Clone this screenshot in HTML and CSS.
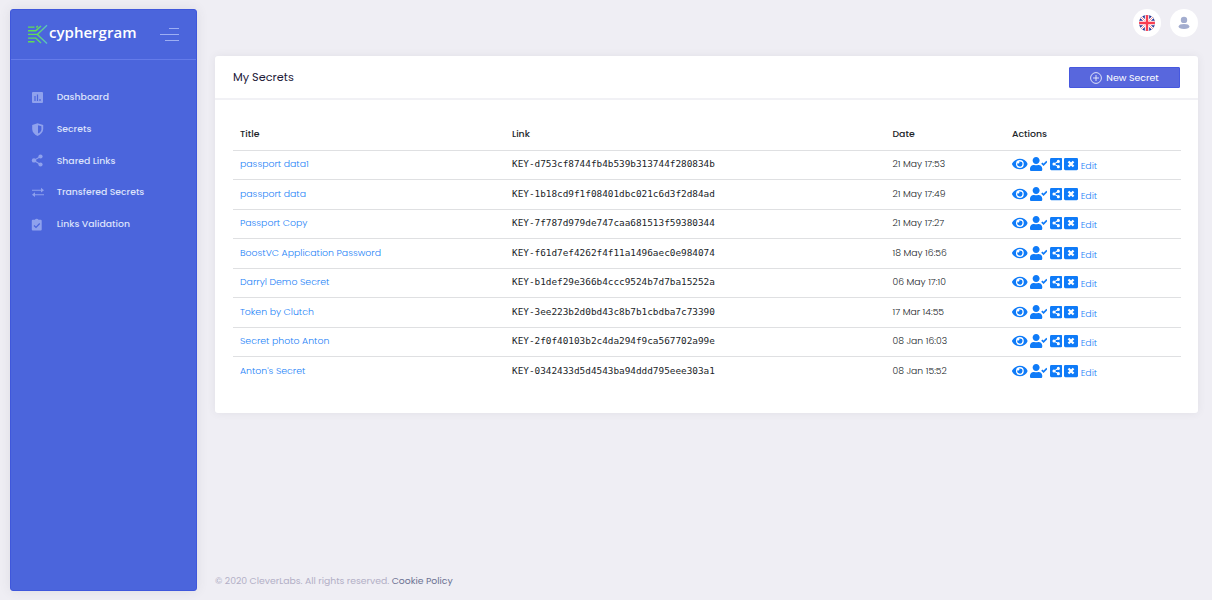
FILE: index.html
```html
<!DOCTYPE html>
<html lang="en">
  <head>
    <meta charset="UTF-8" />
    <meta name="viewport" content="width=device-width, initial-scale=1.0" />
    <title>My Secrets</title>
    <link rel="stylesheet" href="styles.css">
  </head>
  <body>
    <!-- shared icons -->
    <svg class="sprite">
      <symbol id="eye" viewBox="0 0 576 512"><path d="M572.52 241.4C518.29 135.59 410.93 64 288 64S57.68 135.64 3.48 241.41a32.35 32.35 0 0 0 0 29.19C57.71 376.41 165.07 448 288 448s230.32-71.64 284.52-177.41a32.35 32.35 0 0 0 0-29.19zM288 400a144 144 0 1 1 144-144 143.93 143.93 0 0 1-144 144zm0-240a95.31 95.31 0 0 0-25.31 3.79 47.85 47.85 0 0 1-66.9 66.9A95.78 95.78 0 1 0 288 160z"/></symbol>
      <symbol id="user-check" viewBox="0 0 640 512"><path d="M224 256c70.7 0 128-57.3 128-128S294.7 0 224 0 96 57.3 96 128s57.3 128 128 128zm89.6 32h-16.7c-22.2 10.2-46.9 16-72.9 16s-50.6-5.8-72.9-16h-16.7C60.2 288 0 348.2 0 422.4V464c0 26.5 21.5 48 48 48h352c26.5 0 48-21.5 48-48v-41.6c0-74.2-60.2-134.400-134.400-134.400z"/><path d="M432 222l64 65 122-124" fill="none" stroke="currentColor" stroke-width="62"/></symbol>
      <symbol id="share-square" viewBox="0 0 448 512"><path d="M48 32h352a48 48 0 0 1 48 48v352a48 48 0 0 1-48 48H48a48 48 0 0 1-48-48V80a48 48 0 0 1 48-48z"/><g fill="#fff"><circle cx="304" cy="160" r="56"/><circle cx="144" cy="256" r="56"/><circle cx="304" cy="352" r="56"/></g><path d="M304 160L144 256l160 96" fill="none" stroke="#fff" stroke-width="36"/></symbol>
      <symbol id="close-square" viewBox="0 0 512 512"><path d="M48 32h416a48 48 0 0 1 48 48v352a48 48 0 0 1-48 48H48a48 48 0 0 1-48-48V80a48 48 0 0 1 48-48z"/><path d="M164 164l184 184M348 164L164 348" fill="none" stroke="#fff" stroke-width="84"/></symbol>
    </svg>

    <div class="page">
      <aside class="sidebar">
        <div class="brand">
          <svg class="logo" width="112" height="24" viewBox="0 0 112 24">
            <defs>
              <linearGradient id="mark" gradientUnits="userSpaceOnUse" x1="0" y1="0" x2="19" y2="0">
                <stop offset="0" stop-color="#5fdc55" />
                <stop offset=".5" stop-color="#62df52" />
                <stop offset="1" stop-color="#58bdcf" />
              </linearGradient>
            </defs>
            <g fill="none" stroke="url(#mark)" stroke-width="1.4">
              <path d="M0 3.100h6.500M0 6.700h7.700L13 1.900M8.300 3.400l1.500-1.500M0 10.400h9.300M9.300 10.400L19 1.300M9.300 10.400L19 19.500M0 14.100h7.700L13 18.900M0 17.700h6.500" />
            </g>
            <text class="logo-text" x="21" y="14" textLength="87.500" lengthAdjust="spacingAndGlyphs">cyphergram</text>
          </svg>
          <div class="toggle"><span></span><span></span><span></span></div>
        </div>
        <nav class="menu">
          <a class="menu-item">
            <svg width="13" height="13" viewBox="0 0 13 13"><rect x="1" y="1" width="11" height="11" rx="1"/><path class="cut" d="M4 5v5M6.500 3.500V10M9 8v2"/></svg>
            <span>Dashboard</span>
          </a>
          <a class="menu-item">
            <svg width="13" height="13" viewBox="0 0 13 13"><path d="M6.500.3L12.200 2v4c0 3.200-2.500 5.500-5.700 6.900C3.300 11.500 1.200 9 1.200 6V2z"/><path class="half" d="M7 2.200l3.400 1v3c0 1.900-1.300 3.300-3.400 4.300z"/></svg>
            <span>Secrets</span>
          </a>
          <a class="menu-item">
            <svg width="13" height="13" viewBox="0 0 13 13"><circle cx="9.500" cy="2.500" r="2.100"/><circle cx="3" cy="6.400" r="2.200"/><circle cx="9.500" cy="10.500" r="2.100"/><path class="line" d="M9.500 2.500L3 6.400l6.500 4.100"/></svg>
            <span>Shared Links</span>
          </a>
          <a class="menu-item">
            <svg width="13" height="13" viewBox="0 0 13 13"><path class="line" d="M1 4.200h10M3 8.700h10"/><path d="M10 1.800l3 2.400-3 2.400zM4 6.300L1 8.700l3 2.400z"/></svg>
            <span>Transfered Secrets</span>
          </a>
          <a class="menu-item">
            <svg width="13" height="13" viewBox="0 0 13 13"><path d="M1.800 1.800h2.100a2 2 0 0 1 3.600 0h2.200q1 0 1 1v8.700q0 1-1 1H1.800q-1 0-1-1V2.800q0-1 1-1z"/><path class="cut" d="M3 7.500l2 2 3.700-4"/></svg>
            <span>Links Validation</span>
          </a>
        </nav>
      </aside>

      <main class="main">
        <header class="topbar">
          <div class="round">
            <svg width="16" height="16" viewBox="0 0 16 16">
              <clipPath id="disc"><circle cx="8" cy="8" r="8"/></clipPath>
              <g clip-path="url(#disc)">
                <rect width="16" height="16" fill="#263594"/>
                <path d="M0 0l16 16M16 0L0 16" stroke="#fff" stroke-width="2.600"/>
                <path d="M0 0l16 16M16 0L0 16" stroke="#f0606d" stroke-width=".7"/>
                <path d="M8 0v16M0 8h16" stroke="#fff" stroke-width="4.400"/>
                <path d="M8 0v16M0 8h16" stroke="#f83d50" stroke-width="2.400"/>
              </g>
            </svg>
          </div>
          <div class="round">
            <svg width="12" height="14" viewBox="0 0 12 14" fill="#a3adcf"><circle cx="6" cy="3.900" r="3.200"/><path d="M.6 10.500C.8 8.800 2.700 8 6 8s5.200.8 5.400 2.500c.1 1.600-2 2.500-5.400 2.500S.5 12.100.6 10.500z"/></svg>
          </div>
        </header>

        <section class="card">
          <div class="card-header">
            <h1>My Secrets</h1>
            <button class="new-btn">
              <svg width="12" height="12" viewBox="0 0 12 12" fill="none" stroke="#fff" stroke-width=".8"><circle cx="6" cy="6" r="5.400"/><path d="M6 3v6M3 6h6"/></svg>
              <span>New Secret</span>
            </button>
          </div>
          <div class="card-body">
            <table class="secrets">
              <thead>
                <tr><th class="col-title">Title</th><th class="col-link">Link</th><th class="col-date">Date</th><th>Actions</th></tr>
              </thead>
              <tbody>
                <tr>
                  <td><a>passport data1</a></td><td class="key">KEY-d753cf8744fb4b539b313744f280834b</td><td class="date">21 May 17:53</td>
                  <td><div class="actions"><svg class="eye"><use href="#eye"/></svg><svg class="user"><use href="#user-check"/></svg><svg class="share"><use href="#share-square"/></svg><svg class="close"><use href="#close-square"/></svg><a>Edit</a></div></td>
                </tr>
                <tr>
                  <td><a>passport data</a></td><td class="key">KEY-1b18cd9f1f08401dbc021c6d3f2d84ad</td><td class="date">21 May 17:49</td>
                  <td><div class="actions"><svg class="eye"><use href="#eye"/></svg><svg class="user"><use href="#user-check"/></svg><svg class="share"><use href="#share-square"/></svg><svg class="close"><use href="#close-square"/></svg><a>Edit</a></div></td>
                </tr>
                <tr>
                  <td><a>Passport Copy</a></td><td class="key">KEY-7f787d979de747caa681513f59380344</td><td class="date">21 May 17:27</td>
                  <td><div class="actions"><svg class="eye"><use href="#eye"/></svg><svg class="user"><use href="#user-check"/></svg><svg class="share"><use href="#share-square"/></svg><svg class="close"><use href="#close-square"/></svg><a>Edit</a></div></td>
                </tr>
                <tr>
                  <td><a>BoostVC Application Password</a></td><td class="key">KEY-f61d7ef4262f4f11a1496aec0e984074</td><td class="date">18 May 16:56</td>
                  <td><div class="actions"><svg class="eye"><use href="#eye"/></svg><svg class="user"><use href="#user-check"/></svg><svg class="share"><use href="#share-square"/></svg><svg class="close"><use href="#close-square"/></svg><a>Edit</a></div></td>
                </tr>
                <tr>
                  <td><a>Darryl Demo Secret</a></td><td class="key">KEY-b1def29e366b4ccc9524b7d7ba15252a</td><td class="date">06 May 17:10</td>
                  <td><div class="actions"><svg class="eye"><use href="#eye"/></svg><svg class="user"><use href="#user-check"/></svg><svg class="share"><use href="#share-square"/></svg><svg class="close"><use href="#close-square"/></svg><a>Edit</a></div></td>
                </tr>
                <tr>
                  <td><a>Token by Clutch</a></td><td class="key">KEY-3ee223b2d0bd43c8b7b1cbdba7c73390</td><td class="date">17 Mar 14:55</td>
                  <td><div class="actions"><svg class="eye"><use href="#eye"/></svg><svg class="user"><use href="#user-check"/></svg><svg class="share"><use href="#share-square"/></svg><svg class="close"><use href="#close-square"/></svg><a>Edit</a></div></td>
                </tr>
                <tr>
                  <td><a>Secret photo Anton</a></td><td class="key">KEY-2f0f40103b2c4da294f9ca567702a99e</td><td class="date">08 Jan 16:03</td>
                  <td><div class="actions"><svg class="eye"><use href="#eye"/></svg><svg class="user"><use href="#user-check"/></svg><svg class="share"><use href="#share-square"/></svg><svg class="close"><use href="#close-square"/></svg><a>Edit</a></div></td>
                </tr>
                <tr>
                  <td><a>Anton's Secret</a></td><td class="key">KEY-0342433d5d4543ba94ddd795eee303a1</td><td class="date">08 Jan 15:52</td>
                  <td><div class="actions"><svg class="eye"><use href="#eye"/></svg><svg class="user"><use href="#user-check"/></svg><svg class="share"><use href="#share-square"/></svg><svg class="close"><use href="#close-square"/></svg><a>Edit</a></div></td>
                </tr>
              </tbody>
            </table>
          </div>
        </section>

        <footer class="footer">© 2020 CleverLabs. All rights reserved. <a>Cookie Policy</a></footer>
      </main>
    </div>
  </body>
</html>
```
FILE: styles.css
```css
* {
  box-sizing: border-box;
}

body {
  margin: 0;
  font-family: Poppins, Inter, sans-serif;
  font-size: 9.35px;
  background-color: #efeef4;
  color: #212529;
}

.sprite {
  display: none;
}

.page {
  display: flex;
  gap: 18px;
  height: 600px;
  padding: 9px 14px 9px 10px;
}

.sidebar {
  width: 187px;
  flex-shrink: 0;
  background-color: #4b65dc;
  border: 1px solid #3f57dc;
  border-radius: 3px;
  box-shadow: 0 0 12px rgba(69, 65, 78, 0.1);
}

.brand {
  display: flex;
  justify-content: space-between;
  height: 50px;
  padding: 14px 17px 0 17px;
  border-bottom: 1px solid #647bea;
}

.logo-text {
  font-family: "Open Sans", sans-serif;
  font-size: 14.5px;
  font-weight: 600;
  fill: #fff;
}

.toggle {
  display: flex;
  flex-direction: column;
  align-items: flex-end;
  gap: 5px;
  padding-top: 4px;
}

.toggle span {
  width: 19px;
  height: 1px;
  background-color: #9daef3;
}

.toggle span:first-child {
  width: 10px;
}

.toggle span:last-child {
  width: 14px;
}

.menu {
  padding: 21.5px 0 0 19.5px;
}

.menu-item {
  display: flex;
  align-items: center;
  gap: 13.2px;
  height: 31.7px;
  color: #dce2fb;
  font-size: 9.3px;
  font-weight: 500;
}

.menu-item svg {
  fill: #8fa1ed;
}

.menu-item .line {
  fill: none;
  stroke: #8fa1ed;
  stroke-width: 1.1;
}

.menu-item .cut {
  fill: none;
  stroke: #4b65dc;
  stroke-width: 1.2;
}

.menu-item .half {
  fill: #4b65dc;
}

.main {
  display: flex;
  flex-direction: column;
  flex: 1;
}

.topbar {
  display: flex;
  justify-content: flex-end;
  gap: 9px;
  height: 47px;
}

.round {
  display: flex;
  align-items: center;
  justify-content: center;
  width: 28px;
  height: 28px;
  border-radius: 50%;
  background-color: #fff;
}

.card {
  height: 357px;
  background-color: #fff;
  border-radius: 3px;
  box-shadow: 0 0 8px rgba(69, 65, 78, 0.08);
}

.card-header {
  display: flex;
  align-items: center;
  justify-content: space-between;
  height: 44px;
  padding: 0 18px;
  border-bottom: 2px solid #f1f1f5;
}

.card-header h1 {
  margin: 0;
  font-size: 11.3px;
  font-weight: 400;
  color: #1c1939;
}

.new-btn {
  display: flex;
  align-items: center;
  justify-content: center;
  gap: 4px;
  width: 111px;
  height: 21px;
  padding: 1px 0 0;
  border: 1px solid #4658df;
  border-radius: 1px;
  background-color: #5867dd;
  color: #fff;
  font-family: inherit;
  font-size: 9.4px;
}

.card-body {
  padding: 17px 17px 0 18px;
}

.secrets {
  width: 100%;
  table-layout: fixed;
  border-collapse: separate;
  border-spacing: 0;
}

.secrets th {
  height: 33px;
  padding: 0 7px;
  text-align: left;
  font-weight: 500;
  color: #212529;
}

.secrets td {
  height: 29.47px;
  padding: 0 7px 2px;
  border-top: 1px solid #dfe0e2;
  font-weight: 300;
}

.secrets a {
  color: #1c82f7;
}

.col-title {
  width: 272px;
}

.col-link {
  width: 380.5px;
}

.col-date {
  width: 119.5px;
}

.secrets .key {
  padding-bottom: 3px;
  font-family: "DejaVu Sans Mono", monospace;
  font-size: 9.37px;
  font-weight: 400;
}

.secrets .date {
  font-size: 9.25px;
}

.actions {
  display: flex;
  align-items: center;
  gap: 2.3px;
  color: #0f7bf8;
}

.actions svg {
  height: 14px;
  fill: currentColor;
}

.actions .eye {
  width: 15.7px;
}

.actions .user {
  width: 17.5px;
}

.actions .share {
  width: 12.3px;
}

.actions .close {
  width: 14px;
}

.actions a {
  padding-top: 4px;
}

.footer {
  margin-top: auto;
  padding-bottom: 3px;
  color: #b2afc6;
  font-size: 9.27px;
}

.footer a {
  color: #6c7293;
}
```
